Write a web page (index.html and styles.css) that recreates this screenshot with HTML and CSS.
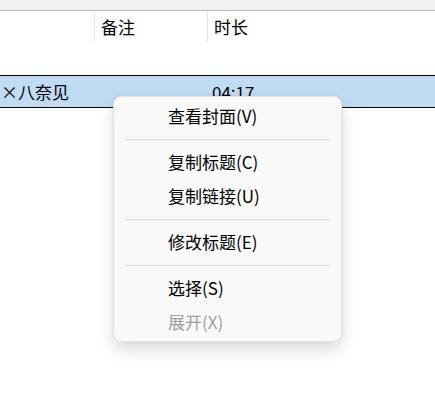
FILE: index.html
```html
<!DOCTYPE html>
<html>
<head>
<meta charset="utf-8">
<link rel="stylesheet" href="styles.css">
</head>
<body>
<div class="topband"></div>
<div class="header">
  <div class="cell c1"></div>
  <div class="cell c2">备注</div>
  <div class="cell c3">时长</div>
</div>
<div class="gap"></div>
<div class="row selected">
  <div class="cell c1 name">×八奈见</div>
  <div class="cell c2"></div>
  <div class="cell c3">04:17</div>
</div>
<div class="menu">
  <div class="item">查看封面(V)</div>
  <div class="sep"></div>
  <div class="item">复制标题(C)</div>
  <div class="item">复制链接(U)</div>
  <div class="sep"></div>
  <div class="item">修改标题(E)</div>
  <div class="sep"></div>
  <div class="item">选择(S)</div>
  <div class="item disabled">展开(X)</div>
</div>
</body>
</html>
```
FILE: styles.css
```css
html, body {
  margin: 0;
  padding: 0;
  background: #ffffff;
  font-family: "Noto Sans CJK SC", "Noto Sans", sans-serif;
  font-size: 17px;
  color: #000;
  width: 435px;
  height: 412px;
  overflow: hidden;
  position: relative;
}
.topband {
  height: 10px;
  background: #f0f0f0;
  border-bottom: 1px solid #b9b9b9;
}
.header, .row {
  display: flex;
}
.header {
  height: 31px;
}
.cell {
  box-sizing: border-box;
  display: flex;
  align-items: center;
  white-space: nowrap;
  overflow: hidden;
}
.c1 { width: 95px; }
.c2 { width: 113px; padding-left: 6px; }
.c3 { flex: 1; padding-left: 6px; }
.header .c1, .header .c2 {
  border-right: 1px solid #e5e5e5;
}
.header .c2 { width: 113px; }
.header .c3 { padding-left: 6px; }
.gap { height: 33px; }
.row {
  height: 31px;
  border-top: 1px solid #000;
  border-bottom: 1px solid #000;
}
.selected { background: #c0dcf3; }
.row .c2 { padding-left: 6px; }
.row .c3 { padding-left: 4px; }
.name { padding-left: 1px; }

.menu {
  position: absolute;
  left: 113px;
  top: 96px;
  width: 229px;
  box-sizing: border-box;
  background: #f9f9f9;
  border: 1px solid #e2e2e2;
  border-radius: 8px;
  padding: 3px 0 1px 0;
  box-shadow: 0 8px 16px rgba(0, 0, 0, 0.14), 0 0 4px rgba(0,0,0,0.05);
}
.item {
  height: 34px;
  box-sizing: border-box;
  display: flex;
  align-items: center;
  padding-left: 54px;
  padding-bottom: 4px;
  white-space: nowrap;
}
.disabled { color: #a0a0a0; }
.sep {
  height: 1px;
  background: #d9d9d9;
  margin: 5px 11px 6px 11px;
}
```
